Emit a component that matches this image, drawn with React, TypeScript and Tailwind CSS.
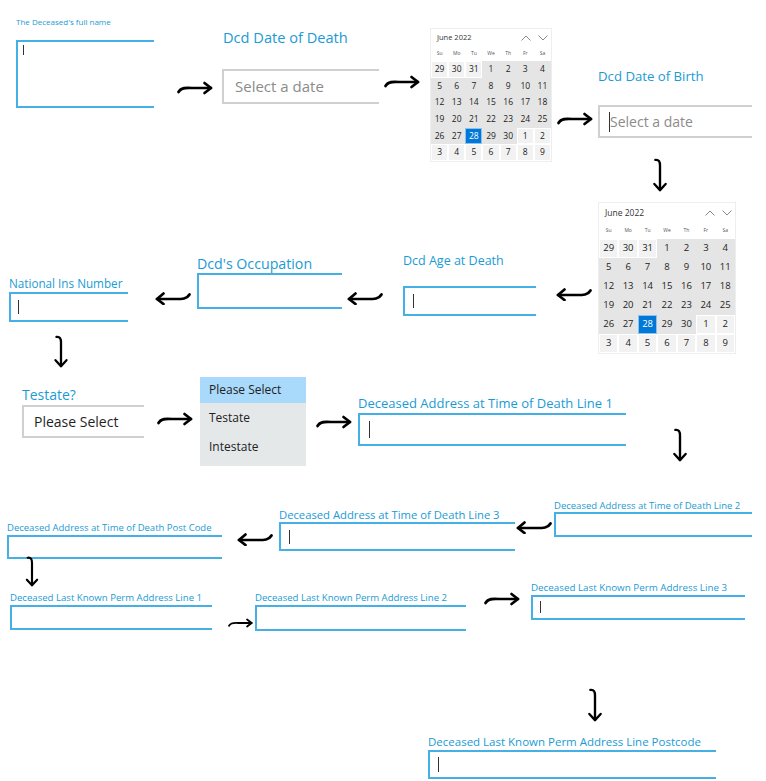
import React from 'react';

// hand drawn flow arrows between the form steps
function RightArrow({ className }: { className: string }) {
  return (
    <svg className={`absolute ${className}`} viewBox="0 0 36 14" fill="none" stroke="#000" strokeWidth={2.7} strokeLinecap="round" strokeLinejoin="round">
      <path d="M1.5 11 C 4 6.5, 9 6.5, 15 7 L 34 7" />
      <path d="M27.5 2 L34 7 L27.5 12" />
    </svg>
  );
}

function LeftArrow({ className }: { className: string }) {
  return (
    <svg className={`absolute ${className}`} viewBox="0 0 36 14" fill="none" stroke="#000" strokeWidth={2.7} strokeLinecap="round" strokeLinejoin="round">
      <path d="M34.5 3.5 C 32 8, 27 8, 21 8 L 2 8" />
      <path d="M8.5 2.5 L2 8 L8.5 13" />
    </svg>
  );
}

function DownArrow({ className }: { className: string }) {
  return (
    <svg className={`absolute ${className}`} viewBox="0 0 16 36" fill="none" stroke="#000" strokeWidth={2.5} strokeLinecap="round" strokeLinejoin="round">
      <path d="M3 2 C 7 1.5, 8 4, 8 8 L 8 34" />
      <path d="M2 27.5 L8 34 L14 27.5" />
    </svg>
  );
}

interface FieldProps {
  className: string;
  label: string;
  labelClass: string;
  boxClass: string;
  cursor?: string;
  text?: string;
  textClass?: string;
  gray?: boolean;
}

// one step of the form: label with its input below. inputs are cropped on the
// right in the screenshots, so they have no right border
function Field({ className, label, labelClass, boxClass, cursor, text, textClass, gray }: FieldProps) {
  return (
    <div className={`absolute flex flex-col items-start ${className}`}>
      <div className={`whitespace-nowrap leading-none text-[#1a9bd4] ${labelClass}`}>{label}</div>
      <div
        className={`flex items-center border-b-2 border-l-2 border-t-2 bg-white ${
          gray ? 'border-[#d0d0d0]' : 'border-[#45b0e5]'
        } ${boxClass}`}
      >
        {cursor && <span className={`w-px shrink-0 bg-[#333] ${cursor}`} />}
        {text && <span className={`whitespace-nowrap leading-[20px] ${textClass}`}>{text}</span>}
      </div>
    </div>
  );
}

const weeks = [
  [29, 30, 31, 1, 2, 3, 4],
  [5, 6, 7, 8, 9, 10, 11],
  [12, 13, 14, 15, 16, 17, 18],
  [19, 20, 21, 22, 23, 24, 25],
  [26, 27, 28, 29, 30, 1, 2],
  [3, 4, 5, 6, 7, 8, 9],
];

function isOutside(row: number, col: number) {
  return (row === 0 && col < 3) || (row === 4 && col > 4) || row === 5;
}

function Calendar({ className, headerClass, dayRowClass, cellClass, titleClass }: {
  className: string;
  headerClass: string;
  dayRowClass: string;
  cellClass: string;
  titleClass: string;
}) {
  return (
    <div className={`absolute flex flex-col bg-white border border-[#eeeeee] ${className}`}>
      <div className={`flex items-center justify-between pl-[6px] pr-[3px] ${headerClass}`}>
        <span className={`text-[#333] ${titleClass}`}>June 2022</span>
        <div className="flex items-center gap-[7px] text-[#888]">
          <svg width="10" height="6" viewBox="0 0 10 6" fill="none" stroke="currentColor" strokeWidth={1}>
            <path d="M0.5 5.5 L5 1 L9.5 5.5" />
          </svg>
          <svg width="10" height="6" viewBox="0 0 10 6" fill="none" stroke="currentColor" strokeWidth={1}>
            <path d="M0.5 0.5 L5 5 L9.5 0.5" />
          </svg>
        </div>
      </div>
      <div className={`grid grid-cols-7 items-center text-center text-[5px] text-[#555] ${dayRowClass}`}>
        {['Su', 'Mo', 'Tu', 'We', 'Th', 'Fr', 'Sa'].map((d) => (
          <span key={d}>{d}</span>
        ))}
      </div>
      <div className="grid flex-1 grid-cols-7 grid-rows-6">
        {weeks.map((week, r) =>
          week.map((day, c) => {
            const selected = r === 4 && c === 2;
            const outside = isOutside(r, c);
            return (
              <div
                key={`${r}-${c}`}
                className={`flex items-center justify-center border ${cellClass} ${
                  selected
                    ? 'bg-[#0078d7] border-[#8cc3ee] text-white'
                    : outside
                      ? 'bg-[#f2f2f2] border-white text-[#222]'
                      : 'bg-[#e5e5e5] border-[#e5e5e5] text-[#222]'
                }`}
              >
                {day}
              </div>
            );
          }),
        )}
      </div>
    </div>
  );
}

export default function App() {
  return (
    <div className="relative h-[781px] w-[766px] overflow-hidden bg-white font-['Open_Sans','Noto_Sans',sans-serif]">
      {/* row 1 */}
      <Field
        className="left-[16px] top-[18px]"
        label="The Deceased's full name"
        labelClass="text-[8px]"
        boxClass="mt-[14px] h-[68px] w-[138px] items-start pl-[5px] pt-[3px] border-[#6cc6ef]"
        cursor="h-[10px]"
      />
      <RightArrow className="left-[177px] top-[81px] h-[14px] w-[36px]" />

      <Field
        gray
        className="left-[222px] top-[30px]"
        label="Dcd Date of Death"
        labelClass="ml-px text-[14.6px]"
        boxClass="mt-[24px] h-[35px] w-[157px] pl-[11px]"
        text="Select a date"
        textClass="text-[15px] text-[#8b8b8b]"
      />
      <RightArrow className="left-[384px] top-[75px] h-[14px] w-[36px]" />

      <Calendar
        className="left-[430px] top-[28px] h-[134px] w-[122px]"
        headerClass="h-[18px]"
        dayRowClass="h-[14px]"
        cellClass="text-[8.5px]"
        titleClass="text-[7.5px]"
      />
      <RightArrow className="left-[557px] top-[112px] h-[14px] w-[36px]" />

      <Field
        gray
        className="left-[598px] top-[70px]"
        label="Dcd Date of Birth"
        labelClass="text-[13.2px]"
        boxClass="mt-[22px] h-[33px] w-[154px] pl-[9px]"
        cursor="h-[20px]"
        text="Select a date"
        textClass="text-[14px] text-[#8b8b8b]"
      />
      <DownArrow className="left-[652px] top-[158px] h-[34px] w-[16px]" />

      {/* row 2, flowing right to left */}
      <Calendar
        className="left-[598px] top-[202px] h-[152px] w-[138px]"
        headerClass="h-[20px]"
        dayRowClass="h-[16px]"
        cellClass="text-[9.5px]"
        titleClass="text-[8.5px]"
      />
      <LeftArrow className="left-[556px] top-[287px] h-[14px] w-[36px]" />

      <Field
        className="left-[403px] top-[255px]"
        label="Dcd Age at Death"
        labelClass="text-[12.5px]"
        boxClass="mt-[18px] h-[30px] w-[133px] pl-[8px]"
        cursor="h-[14px]"
      />
      <LeftArrow className="left-[347px] top-[291px] h-[14px] w-[36px]" />

      <Field
        className="left-[197px] top-[257px]"
        label="Dcd's Occupation"
        labelClass="text-[14.2px]"
        boxClass="mt-[2px] h-[36px] w-[145px]"
      />
      <LeftArrow className="left-[155px] top-[291px] h-[14px] w-[36px]" />

      <Field
        className="left-[9px] top-[278px]"
        label="National Ins Number"
        labelClass="text-[11.7px]"
        boxClass="mt-[2px] h-[30px] w-[119px] pl-[7px]"
        cursor="h-[14px]"
      />
      <DownArrow className="left-[53px] top-[335px] h-[33px] w-[16px]" />

      {/* row 3 */}
      <Field
        gray
        className="left-[22px] top-[388px]"
        label="Testate?"
        labelClass="text-[14px]"
        boxClass="mt-[3px] h-[33px] w-[122px] pl-[10px]"
        text="Please Select"
        textClass="text-[14px] text-[#1f1f1f]"
      />
      <RightArrow className="left-[157px] top-[412px] h-[14px] w-[36px]" />

      <div className="absolute left-[200px] top-[377px] flex h-[89px] w-[106px] flex-col bg-[#e5e8e9] text-[12px] text-[#222]">
        <div className="flex h-[26px] items-center bg-[#a9d9fb] pl-[9px]">Please Select</div>
        <div className="flex h-[29px] items-center pl-[9px]">Testate</div>
        <div className="flex h-[30px] items-center pl-[9px]">Intestate</div>
      </div>
      <RightArrow className="left-[316px] top-[415px] h-[14px] w-[36px]" />

      <Field
        className="left-[358px] top-[397px]"
        label="Deceased Address at Time of Death Line 1"
        labelClass="text-[13px]"
        boxClass="mt-[3px] h-[33px] w-[268px] pl-[9px]"
        cursor="h-[17px]"
      />
      <DownArrow className="left-[672px] top-[428px] h-[34px] w-[16px]" />

      {/* row 4, flowing right to left */}
      <Field
        className="left-[554px] top-[501px]"
        label="Deceased Address at Time of Death Line 2"
        labelClass="text-[9.5px]"
        boxClass="mt-[1.5px] h-[25px] w-[198px]"
      />
      <LeftArrow className="left-[516px] top-[520px] h-[14px] w-[36px]" />

      <Field
        className="left-[279px] top-[509px]"
        label="Deceased Address at Time of Death Line 3"
        labelClass="text-[11.25px]"
        boxClass="mt-[2px] h-[29px] w-[236px] pl-[8px]"
        cursor="h-[14px]"
      />
      <LeftArrow className="left-[237px] top-[532px] h-[14px] w-[36px]" />

      <Field
        className="left-[7px] top-[523px]"
        label="Deceased Address at Time of Death Post Code"
        labelClass="text-[9.5px]"
        boxClass="mt-[2.5px] h-[24px] w-[215px]"
      />
      <DownArrow className="left-[24px] top-[556px] h-[31px] w-[16px]" />

      {/* row 5 */}
      <Field
        className="left-[10px] top-[593px]"
        label="Deceased Last Known Perm Address Line 1"
        labelClass="text-[9.6px]"
        boxClass="mt-[2.5px] h-[25px] w-[202px] border-[#6cc6ef]"
      />
      <RightArrow className="left-[228px] top-[617px] h-[12px] w-[25px]" />

      <Field
        className="left-[255px] top-[593px]"
        label="Deceased Last Known Perm Address Line 2"
        labelClass="text-[9.6px]"
        boxClass="mt-[2.5px] h-[26px] w-[211px]"
      />
      <RightArrow className="left-[484px] top-[592px] h-[14px] w-[36px]" />

      <Field
        className="left-[531px] top-[583px]"
        label="Deceased Last Known Perm Address Line 3"
        labelClass="text-[9.8px]"
        boxClass="mt-[2px] h-[25px] w-[214px] pl-[7px]"
        cursor="h-[12px]"
      />

      <DownArrow className="left-[587px] top-[688px] h-[34px] w-[16px]" />

      <Field
        className="left-[428px] top-[736px]"
        label="Deceased Last Known Perm Address Line Postcode"
        labelClass="text-[11.5px]"
        boxClass="mt-[2.5px] h-[29px] w-[288px] pl-[8px]"
        cursor="h-[15px]"
      />
    </div>
  );
}
